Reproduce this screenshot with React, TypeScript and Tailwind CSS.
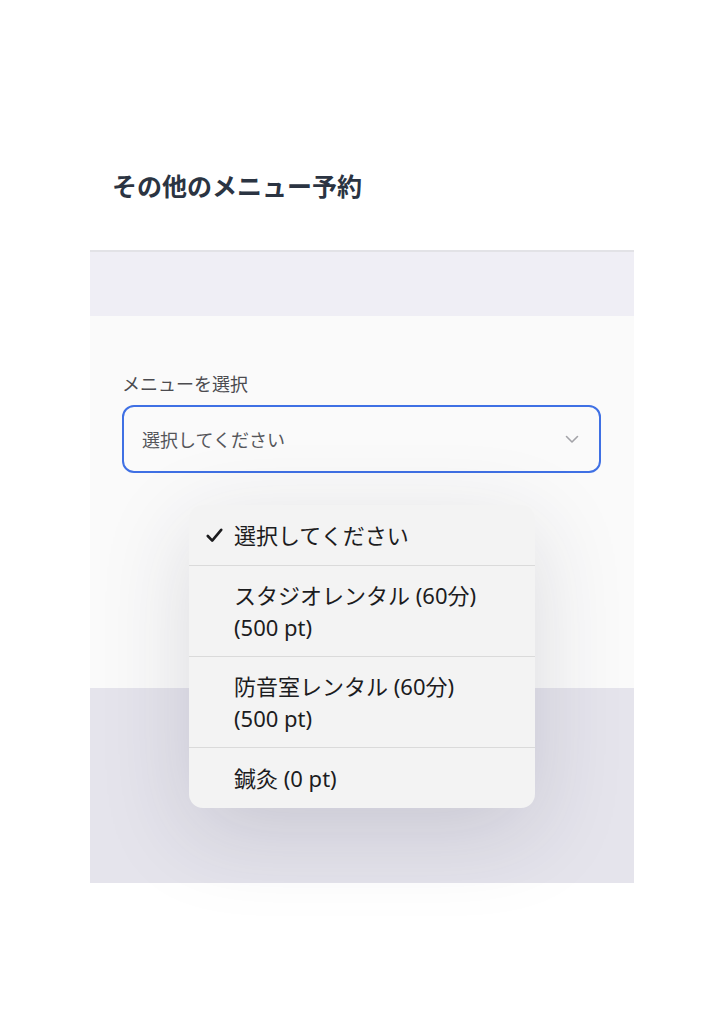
const options = [
  { label: "選択してください", selected: true },
  { label: "スタジオレンタル (60分)\n(500 pt)" },
  { label: "防音室レンタル (60分)\n(500 pt)" },
  { label: "鍼灸 (0 pt)" },
];

export default function App() {
  return (
    <div className="relative min-h-[1024px] bg-white font-['Noto_Sans_CJK_JP',sans-serif]">
      {/* Heading */}
      <div className="pt-[169px] pl-[112px]">
        <h2 className="text-[25px] leading-[32px] font-bold text-[#2b3442]">その他のメニュー予約</h2>
      </div>

      {/* Panel */}
      <div className="mt-[49px] ml-[90px] w-[544px] flex flex-col">
        <div className="h-[66px] bg-[#efeef5] border-t-2 border-[#e2e2e6]" />
        <div className="h-[372px] bg-[#fafafa] px-[32px] pt-[54px]">
          <label className="block text-[18px] leading-[26px] text-[#4b4b4f]">メニューを選択</label>
          <div className="mt-[9px] w-[479px] h-[68px] rounded-[12px] border-2 border-[#3f70e4] bg-[#fafafa] flex items-center justify-between pl-[18px] pr-[20px]">
            <span className="text-[18px] text-[#55565a]">選択してください</span>
            <svg width="14" height="9" viewBox="0 0 14 9" fill="none">
              <path d="M1.5 1.5 L7 7 L12.5 1.5" stroke="#a3a3a8" strokeWidth="1.6" strokeLinecap="round" strokeLinejoin="round" />
            </svg>
          </div>
        </div>
        <div className="h-[195px] bg-[#e5e4ec]" />
      </div>

      {/* Native select popover */}
      <div className="absolute left-[189px] top-[505px] w-[346px] rounded-[14px] bg-[#f3f3f3] shadow-[0_24px_90px_rgba(40,40,70,0.15)] overflow-hidden font-['Noto_Sans','Noto_Sans_CJK_JP',sans-serif]">
        {options.map((o, i) => (
          <div
            key={i}
            className={
              "relative pl-[45px] pr-[16px] text-[22px] leading-[32px] text-[#1c1c1e] whitespace-pre-line" +
              (o.label.includes("\n") ? " py-[13px]" : " py-[14px]") +
              (i > 0 ? " border-t border-[#dadada]" : "")
            }
          >
            {o.selected && (
              <svg className="absolute left-[17px] top-[23px]" width="17" height="15" viewBox="0 0 17 15" fill="none">
                <path d="M1.8 8 L6.2 12.6 L15.2 1.8" stroke="#1c1c1e" strokeWidth="2.6" strokeLinecap="round" strokeLinejoin="round" />
              </svg>
            )}
            {o.label}
          </div>
        ))}
      </div>
    </div>
  );
}
